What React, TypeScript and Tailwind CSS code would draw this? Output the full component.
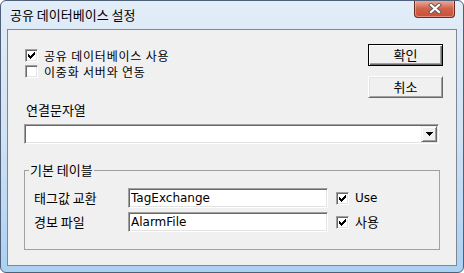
import React from "react";

const KR = "font-['Noto_Sans_CJK_KR',sans-serif]";
const LAT = "font-['DejaVu_Sans','Noto_Sans_CJK_KR',sans-serif]";

const sunken =
  "border border-t-[#a0a0a0] border-l-[#a0a0a0] border-b-white border-r-white shadow-[inset_1px_1px_0_#696969,inset_-1px_-1px_0_#e3e3e3]";

function Check({ checked }: { checked?: boolean }) {
  const cols = [
    [1, 3],
    [2, 4],
    [3, 5],
    [4, 4],
    [5, 3],
    [6, 2],
    [7, 1],
  ];
  return (
    <span className={`relative block w-[13px] h-[13px] shrink-0 bg-white ${sunken}`}>
      {checked && (
        <svg
          className="absolute left-[1px] top-[1px]"
          width="9"
          height="9"
          viewBox="0 0 9 9"
          shapeRendering="crispEdges"
        >
          {cols.map(([x, y]) => (
            <rect key={x} x={x} y={y} width="1" height="3" fill="#000" />
          ))}
        </svg>
      )}
    </span>
  );
}

function CheckRow({
  checked,
  label,
  latin,
  compact,
}: {
  checked?: boolean;
  label: string;
  latin?: boolean;
  compact?: boolean;
}) {
  const textCls = latin
    ? `text-[12px] ${LAT}`
    : compact
    ? `text-[12px] tracking-[0.8px] ${KR}`
    : `text-[13px] ${KR}`;
  return (
    <div className="flex items-center h-[15px] gap-[6px]">
      <Check checked={checked} />
      <span className={`leading-[14px] text-black whitespace-nowrap ${textCls}`}>{label}</span>
    </div>
  );
}

function Edit({ value }: { value: string }) {
  return (
    <div className={`w-[200px] h-[20px] bg-white flex items-center pl-[2px] ${sunken}`}>
      <span className={`text-[12px] leading-[14px] text-black ${LAT}`}>{value}</span>
    </div>
  );
}

export default function App() {
  return (
    <div className={`w-[464px] h-[273px] ${KR}`}>
      <div className="w-[464px] h-[273px] flex flex-col border border-[#4f6178] rounded-[6px] bg-linear-to-b from-[#e2edf8] via-[#d1e2f4] to-[#aad0f2] overflow-hidden">
        {/* title bar */}
        <div className="h-[28px] flex items-start justify-between">
          <div className="h-[28px] flex items-center pl-[9px] text-[13px] leading-[14px] text-black">
            공유 데이터베이스 설정
          </div>
          <div className="-mt-px mr-[8px] w-[41px] h-[18px] rounded-b-[4px] border border-t-0 border-[#6b2a1f] bg-linear-to-b from-[#eab1a3] via-[#d0634b] to-[#c94f35] flex items-center justify-center shadow-[inset_0_0_0_1px_rgba(255,200,190,0.5)]">
            <svg width="14" height="11" viewBox="0 0 14 11">
              <path d="M3 2 L11 9 M11 2 L3 9" stroke="#5b5b5b" strokeWidth="4" strokeLinecap="square" />
              <path d="M3 2 L11 9 M11 2 L3 9" stroke="#ffffff" strokeWidth="2.2" strokeLinecap="square" />
            </svg>
          </div>
        </div>

        {/* client area */}
        <div className="mx-[6px] h-[237px] border border-[#7d8896] bg-[#f0f0f0] flex flex-col pl-[16px] pr-[13px] text-[13px]">
          <div className="mt-[14px] flex justify-between h-[54px]">
            <div className="ml-[1px] pt-[4px] flex flex-col gap-[1px]">
              <CheckRow checked compact label="공유 데이터베이스 사용" />
              <CheckRow compact label="이중화 서버와 연동" />
            </div>
            <div className="flex flex-col gap-[10px]">
              <button className="w-[75px] h-[22px] bg-[#f0f0f0] border border-black shadow-[inset_1px_1px_0_#fff,inset_-1px_-1px_0_#696969,inset_-2px_-2px_0_#a0a0a0] text-[13px] leading-[14px] text-black flex items-center justify-center">
                확인
              </button>
              <button className="w-[75px] h-[22px] bg-[#f0f0f0] border border-t-white border-l-white border-b-[#696969] border-r-[#696969] shadow-[inset_1px_1px_0_#e3e3e3,inset_-1px_-1px_0_#a0a0a0] text-[13px] leading-[14px] text-black flex items-center justify-center">
                취소
              </button>
            </div>
          </div>

          <div className="mt-[5px] ml-[2px] text-[13px] leading-[14px] text-black">연결문자열</div>

          <div className={`mt-[7px] w-[415px] h-[20px] bg-white flex justify-end p-[1px] ${sunken}`}>
            <div className="w-[16px] h-[16px] bg-[#f0f0f0] border border-t-[#f0f0f0] border-l-[#f0f0f0] border-b-[#696969] border-r-[#696969] shadow-[inset_1px_1px_0_#fff,inset_-1px_-1px_0_#a0a0a0] flex items-center justify-center">
              <svg width="7" height="4" viewBox="0 0 7 4" shapeRendering="crispEdges">
                <path d="M0 0 H7 L3.5 4 Z" fill="#000" />
              </svg>
            </div>
          </div>

          <fieldset className="mt-[19px] w-[416px] border border-[#a0a0a0] p-0 m-0 min-w-0">
            <legend className="ml-[4px] px-[1px] text-[13px] leading-[14px] text-black">기본 테이블</legend>
            <div className="pl-[9px] pt-[11px] pb-[17px] flex flex-col gap-[4px]">
              <div className="flex items-center h-[20px]">
                <span className="w-[94px] text-[13px] leading-[14px] text-black">태그값 교환</span>
                <Edit value="TagExchange" />
                <div className="ml-[8px]">
                  <CheckRow checked latin label="Use" />
                </div>
              </div>
              <div className="flex items-center h-[20px]">
                <span className="w-[94px] text-[13px] leading-[14px] text-black">경보 파일</span>
                <Edit value="AlarmFile" />
                <div className="ml-[8px]">
                  <CheckRow checked label="사용" />
                </div>
              </div>
            </div>
          </fieldset>
        </div>
      </div>
    </div>
  );
}
